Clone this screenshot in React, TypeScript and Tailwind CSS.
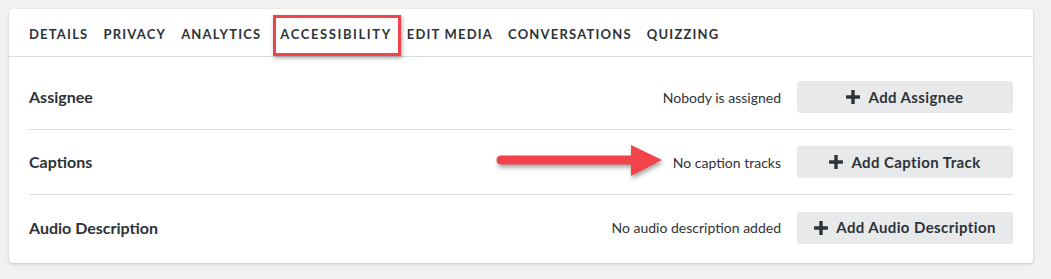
import React from 'react';

const tabs = ['DETAILS', 'PRIVACY', 'ANALYTICS', 'ACCESSIBILITY', 'EDIT MEDIA', 'CONVERSATIONS', 'QUIZZING'];

const rows = [
  { label: 'Assignee', status: 'Nobody is assigned', action: 'Add Assignee' },
  { label: 'Captions', status: 'No caption tracks', action: 'Add Caption Track' },
  { label: 'Audio Description', status: 'No audio description added', action: 'Add Audio Description' },
];

const Plus = () => (
  <svg width="14" height="14" viewBox="0 0 14 14" className="shrink-0">
    <rect x="5.3" y="0" width="3.4" height="14" rx="0.6" fill="#2d3338" />
    <rect x="0" y="5.3" width="14" height="3.4" rx="0.6" fill="#2d3338" />
  </svg>
);

const Arrow = () => (
  <svg
    width="180"
    height="44"
    viewBox="0 0 180 44"
    className="absolute left-[492px] top-[141px] pointer-events-none"
    style={{ filter: 'drop-shadow(1px 3px 2px rgba(0,0,0,0.35))' }}
  >
    <line x1="9" y1="19" x2="142" y2="19" stroke="#f2434a" strokeWidth="9" strokeLinecap="round" />
    <polygon points="139,4 170,19 139,35" fill="#f2434a" />
  </svg>
);

export default function App() {
  return (
    <div className="relative w-[1051px] h-[279px] bg-[#f2f1f0] p-[9px] pr-[18px] font-['Lato','Liberation_Sans',sans-serif] text-[#2d3338]">
      <div className="bg-white rounded-[4px] shadow-[0_1px_3px_rgba(0,0,0,0.2)] h-[254px] w-[1024px]">
        <div className="flex items-end h-[48px] px-[20px] border-b border-[#dcdcdc] gap-[15px]">
          {tabs.map((t) => (
            <div
              key={t}
              className={`h-[46px] flex items-center pt-[6px] text-[13px] font-bold ${
                t === 'ACCESSIBILITY'
                  ? 'ml-[4px] tracking-[1.6px] border-b-2 border-[#2a5db0]'
                  : 'tracking-[1.2px] border-b-2 border-transparent'
              }`}
            >
              {t}
            </div>
          ))}
        </div>
        <div className="px-[20px] pt-[8px]">
          {rows.map((r, i) => (
            <div
              key={r.label}
              className={`flex items-center h-[65px] ${i < rows.length - 1 ? 'border-b border-[#dcdcdc]' : ''}`}
            >
              <div className="flex-1 text-[16px] font-bold">{r.label}</div>
              <div className="text-[14px] mr-[16px]">{r.status}</div>
              <button className="w-[216px] h-[32px] bg-[#e8e9eb] rounded-[3px] flex items-center justify-center gap-[8px] text-[15px] font-bold tracking-[0.4px]">
                <Plus />
                {r.action}
              </button>
            </div>
          ))}
        </div>
      </div>
      <div className="absolute left-[273px] top-[15px] w-[128px] h-[41px] border-[3px] border-[#f2434a] shadow-[1px_2px_4px_rgba(0,0,0,0.35)] pointer-events-none" />
      <Arrow />
    </div>
  );
}
